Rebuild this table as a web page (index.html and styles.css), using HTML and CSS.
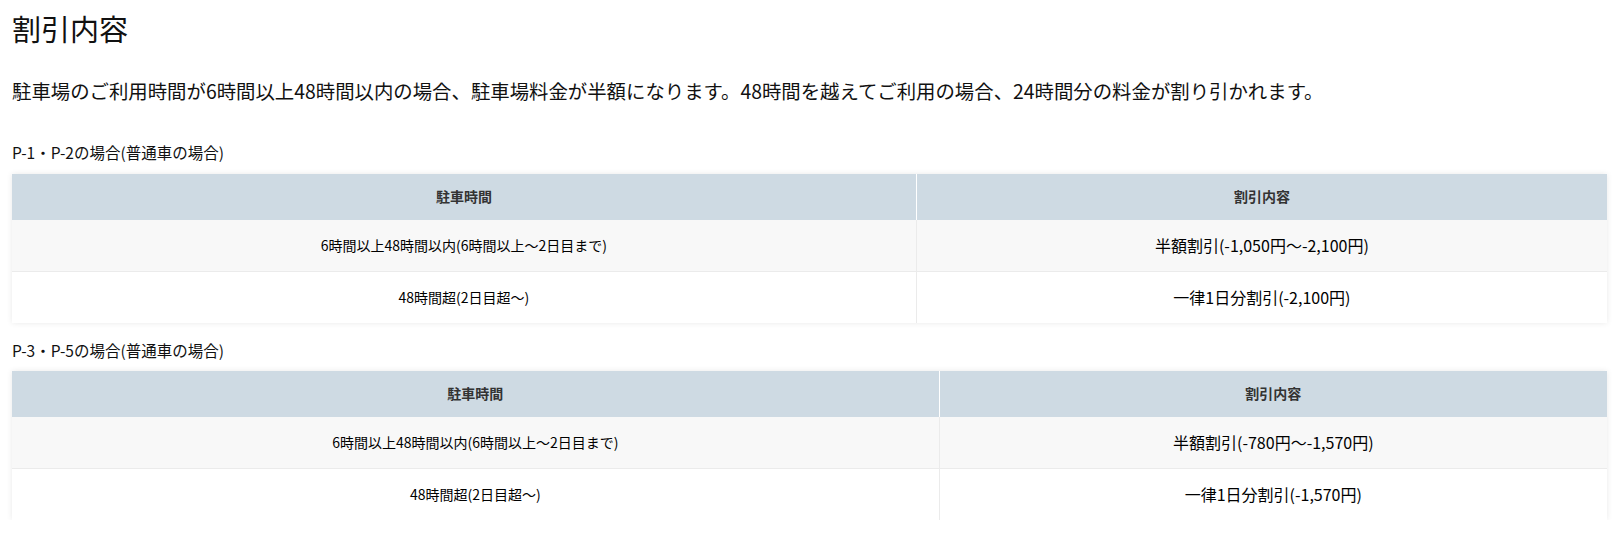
FILE: index.html
```html
<!DOCTYPE html>
<html lang="ja">
<head>
<meta charset="utf-8">
<title>割引内容</title>
<link rel="stylesheet" href="styles.css">
</head>
<body>
<main class="page">
  <h1 class="title">割引内容</h1>
  <p class="lead">駐車場のご利用時間が6時間以上48時間以内の場合、駐車場料金が半額になります。48時間を越えてご利用の場合、24時間分の料金が割り引かれます。</p>

  <h2 class="sub">P-1・P-2の場合(普通車の場合)</h2>
  <table class="rate">
    <thead>
      <tr><th>駐車時間</th><th>割引内容</th></tr>
    </thead>
    <tbody>
      <tr><td class="time">6時間以上48時間以内(6時間以上～2日目まで)</td><td class="disc">半額割引(-1,050円～-2,100円)</td></tr>
      <tr><td class="time">48時間超(2日目超～)</td><td class="disc">一律1日分割引(-2,100円)</td></tr>
    </tbody>
  </table>

  <h2 class="sub second">P-3・P-5の場合(普通車の場合)</h2>
  <table class="rate">
    <thead>
      <tr><th>駐車時間</th><th>割引内容</th></tr>
    </thead>
    <tbody>
      <tr><td class="time">6時間以上48時間以内(6時間以上～2日目まで)</td><td class="disc">半額割引(-780円～-1,570円)</td></tr>
      <tr><td class="time">48時間超(2日目超～)</td><td class="disc">一律1日分割引(-1,570円)</td></tr>
    </tbody>
  </table>
</main>
</body>
</html>
```

FILE: styles.css
```css
html, body {
  margin: 0;
  padding: 0;
  background: #ffffff;
}

body {
  font-family: "Noto Sans CJK JP", "Noto Sans", sans-serif;
  color: #111111;
}

.page {
  padding: 7px 8px 0 12px;
}

.title {
  margin: 0;
  font-size: 29px;
  font-weight: 400;
  line-height: 1.5;
  color: #111111;
}

.lead {
  margin: 25px 0 0;
  font-size: 19.4px;
  line-height: 1.5;
}

.sub {
  margin: 35px 0 10px;
  font-size: 15.5px;
  font-weight: 400;
  line-height: 1.55;
}

.sub.second {
  margin-top: 15px;
  margin-bottom: 9px;
}

.rate {
  width: 100%;
  border-collapse: collapse;
  box-shadow: 0 0 6px rgba(0, 0, 0, 0.09);
  background: #ffffff;
}

.rate th {
  background: #cedae3;
  color: #333333;
  font-size: 14px;
  font-weight: 700;
  line-height: 1.5;
  padding: 12px 10px 13px;
  text-align: center;
  border-left: 1px solid #ffffff;
}

.rate th:first-child {
  border-left: none;
}

.rate td {
  text-align: center;
  padding: 13px 10px;
  line-height: 25px;
  color: #000000;
  border-top: 1px solid #ebebeb;
  border-left: 1px solid #ebebeb;
}

.rate td:first-child {
  border-left: none;
}

.rate tbody tr:first-child td {
  border-top: none;
  background: #f8f8f8;
}

.rate .time {
  font-size: 14px;
}

.rate .disc {
  font-size: 16px;
}
```
